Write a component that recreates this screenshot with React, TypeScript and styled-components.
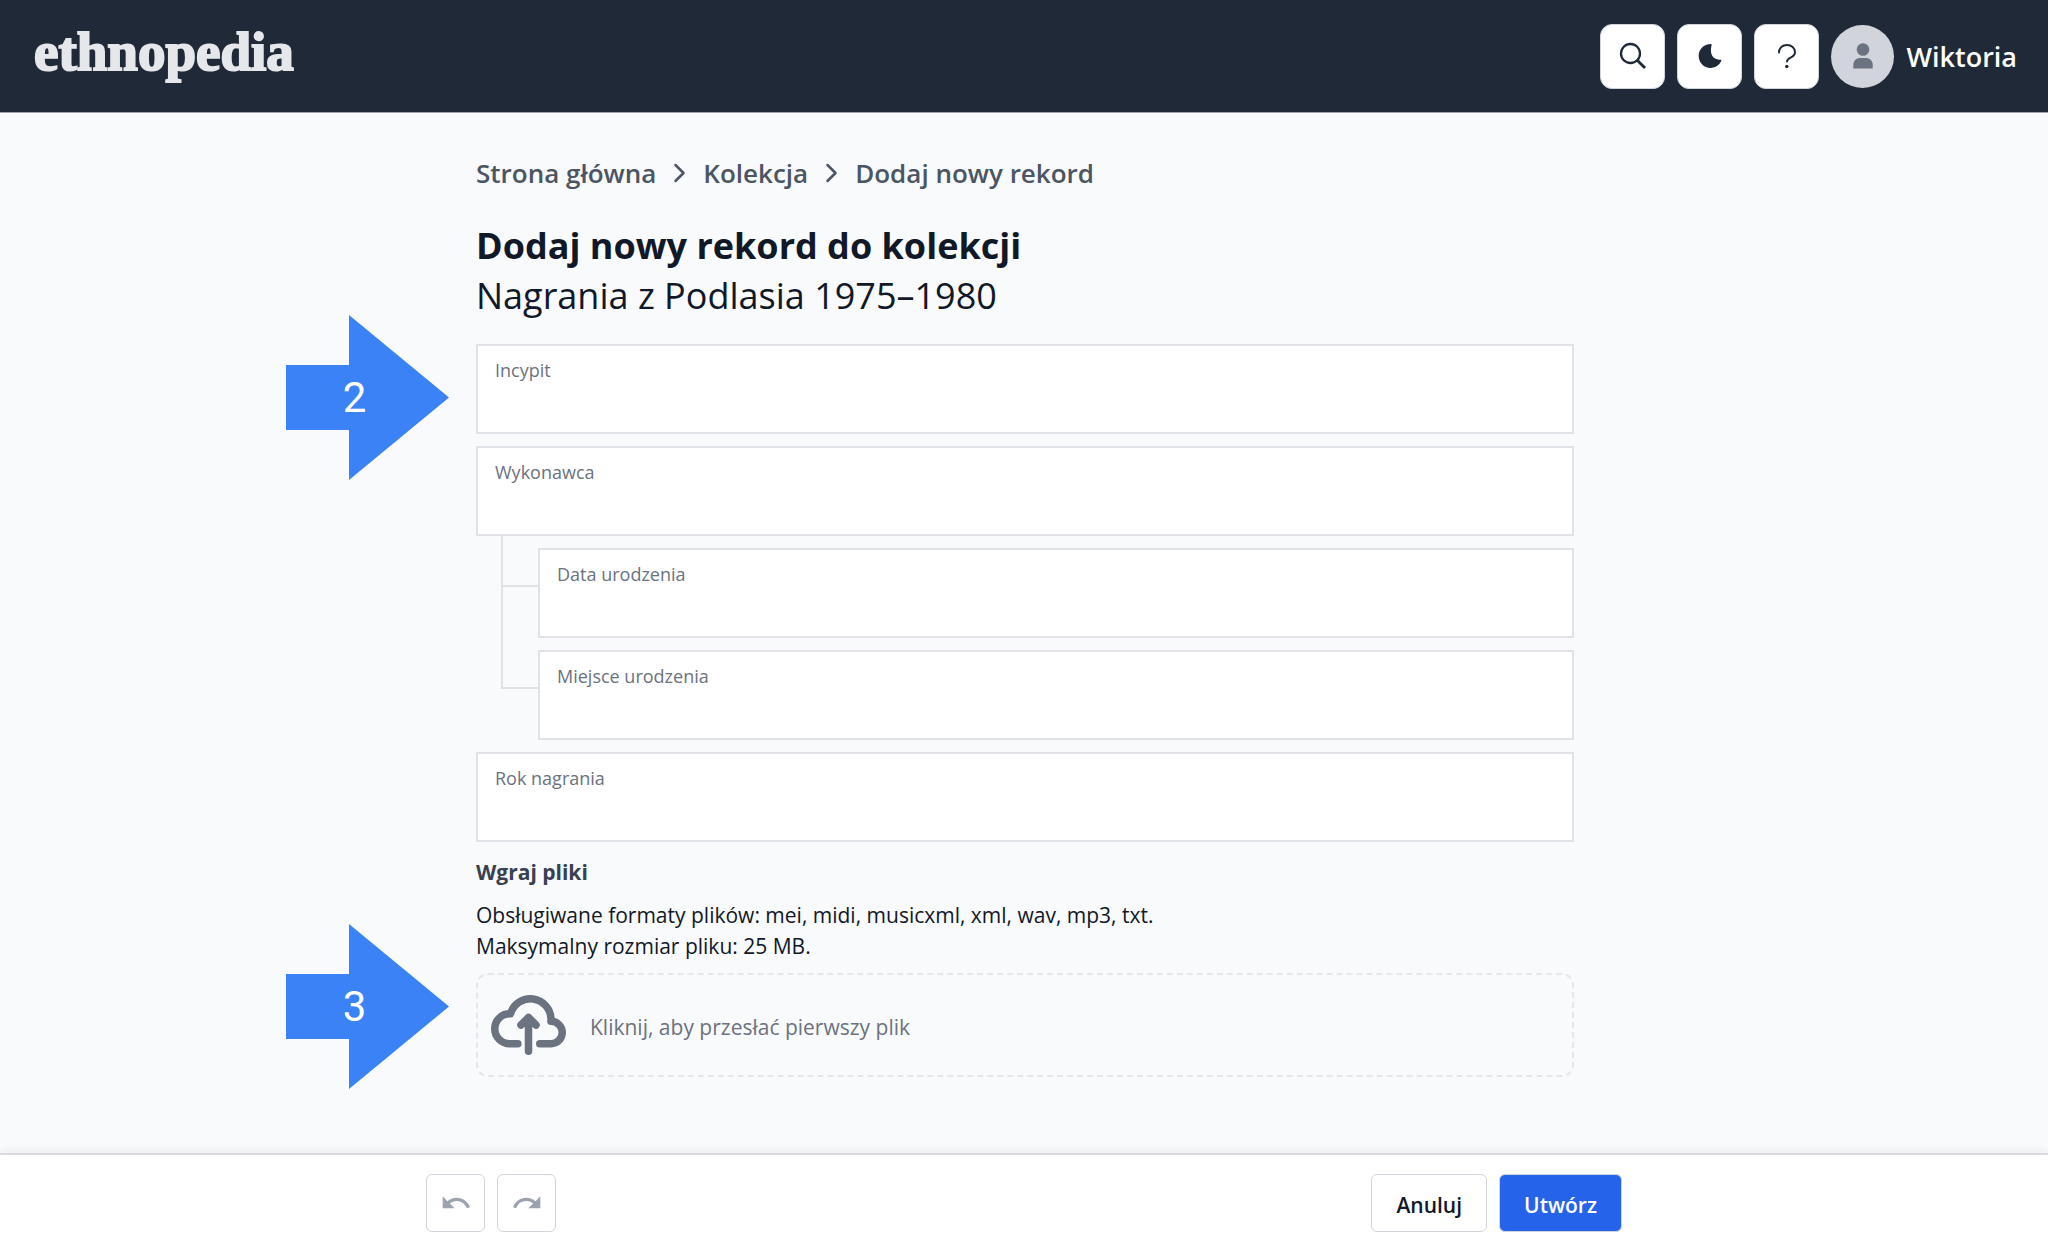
import React from "react";
import styled, { createGlobalStyle } from "styled-components";
import { MdRedo, MdUndo } from "react-icons/md";

const GlobalStyle = createGlobalStyle`
  *, *::before, *::after { box-sizing: border-box; }
  body {
    margin: 0;
    background: #f9fafb;
    color: #111827;
    font-family: "Open Sans", "Noto Sans", sans-serif;
    font-size: 21px;
    line-height: 31px;
  }
  button, input { font: inherit; color: inherit; }
  h1, p, ol { margin: 0; padding: 0; }
`;

const Page = styled.div`
  min-height: 100vh;
  display: flex;
  flex-direction: column;
`;

const Header = styled.header`
  display: flex;
  align-items: center;
  justify-content: space-between;
  height: 113px;
  padding: 0 31px 0 34px;
  background: #1f2937;
  border-bottom: 1px solid #9ca3af;
`;

const Logo = styled.a`
  color: #e5e7eb;
  font-family: "Liberation Serif", serif;
  font-size: 55px;
  font-weight: 700;
  line-height: 64px;
  padding-bottom: 8px;
  text-decoration: none;
  -webkit-text-stroke: 2px #e5e7eb;
`;

const Tools = styled.div`
  display: flex;
  align-items: center;
  gap: 12px;
`;

const ToolButton = styled.button`
  display: grid;
  place-items: center;
  width: 65px;
  height: 65px;
  padding: 0;
  color: #1f2937;
  background: #fff;
  border: 1px solid #d1d5db;
  border-radius: 12px;
`;

const Avatar = styled.span`
  display: grid;
  place-items: center;
  width: 63px;
  height: 63px;
  border-radius: 50%;
  background: #d1d5db;
  color: #6b7280;
`;

const UserName = styled.span`
  color: #fff;
  font-size: 27px;
  font-weight: 600;
`;

const Main = styled.main`
  flex: 1;
  width: 100%;
  max-width: 1196px;
  margin: 0 auto;
  padding: 40px 48px 40px 50px;
`;

const Crumbs = styled.ol`
  display: flex;
  align-items: center;
  gap: 17px;
  list-style: none;
  color: #4b5563;
  font-size: 26px;
  font-weight: 600;
  line-height: 40px;

  li { display: flex; align-items: center; gap: 17px; }
  a { color: inherit; text-decoration: none; }
`;

const Title = styled.h1`
  margin-top: 28px;
  font-size: 36px;
  font-weight: 700;
  line-height: 50px;
`;

const Subtitle = styled.span`
  display: block;
  font-weight: 400;
`;

const Fields = styled.div`
  display: flex;
  flex-direction: column;
  gap: 12px;
  margin-top: 23px;
`;

const Anchor = styled.div`
  position: relative;
`;

const FieldBox = styled.label`
  display: flex;
  flex-direction: column;
  height: 90px;
  padding: 9px 17px;
  background: #fff;
  border: 2px solid #e0e2e7;
  color: #6b7280;
  font-size: 18px;
  line-height: 30px;
`;

const FieldInput = styled.input`
  width: 100%;
  min-height: 0;
  flex: 1;
  padding: 0;
  border: 0;
  outline: 0;
  background: transparent;
  color: #111827;
`;

const ChildRow = styled.div`
  display: grid;
  grid-template-columns: 62px 1fr;
`;

const Elbow = styled.span<{ $first?: boolean }>`
  height: ${(p) => (p.$first ? 51 : 102)}px;
  margin: ${(p) => (p.$first ? -12 : -63)}px 0 0 25px;
  border: solid #e0e2e7;
  border-width: 0 0 2px 2px;
`;

const UploadTitle = styled.p`
  margin-top: 15px;
  color: #374151;
  font-weight: 700;
`;

const UploadInfo = styled.p`
  margin: 12px 0 11px;
`;

const DropZone = styled.label`
  display: flex;
  align-items: center;
  gap: 24px;
  height: 104px;
  padding: 0 13px;
  border: 2px dashed #e5e7eb;
  border-radius: 12px;
  color: #6b7280;
`;

const DropText = styled.span`
  padding-top: 4px;
`;

const HiddenFile = styled.input`
  width: 0;
  height: 0;
  opacity: 0;
  position: absolute;
`;

const Pointer = styled.div<{ $top: number }>`
  position: absolute;
  right: calc(100% + 27px);
  top: ${(p) => p.$top}px;
  display: flex;
  align-items: center;
  justify-content: center;
  width: 163px;
  height: 165px;
  padding-right: 26px;
  background: #3b82f6;
  clip-path: polygon(0 50px, 63px 50px, 63px 0, 100% 50%, 63px 100%, 63px 115px, 0 115px);
  color: #fff;
  font-family: Roboto, "Open Sans", sans-serif;
  font-size: 42px;
`;

const Footer = styled.footer`
  background: #fff;
  border-top: 2px solid #d8dade;
  box-shadow: 0 -2px 8px rgba(0, 0, 0, 0.06);
`;

const FooterInner = styled.div`
  display: flex;
  justify-content: space-between;
  width: 100%;
  max-width: 1196px;
  margin: 0 auto;
  padding: 19px 0 21px;
`;

const Group = styled.div`
  display: flex;
  gap: 12px;
`;

const Action = styled.button<{ $primary?: boolean; $icon?: boolean }>`
  display: grid;
  place-items: center;
  height: 58px;
  width: ${(p) => (p.$icon ? "59px" : "auto")};
  padding: ${(p) => (p.$icon ? "0" : "4px 24px 0")};
  border: 1px solid #d1d5db;
  border-radius: 6px;
  background: ${(p) => (p.$primary ? "#2563eb" : "#fff")};
  color: ${(p) => (p.$primary ? "#fff" : p.$icon ? "#9ca3af" : "#111827")};
  font-weight: 600;
`;

const SearchIcon = () => (
  <svg width="28" height="28" viewBox="0 0 28 28" fill="none" stroke="currentColor">
    <circle cx="11.5" cy="11.5" r="9.5" strokeWidth="2.3" />
    <path d="M18.5 18.5l7.5 7.5" strokeWidth="2.8" />
  </svg>
);

const MoonIcon = () => (
  <svg width="24" height="26" viewBox="0 0 24 26" fill="currentColor">
    <path d="M13.2 1C6 .8.7 6.200.7 13c0 6.700 5.300 12 11.800 12 5.200 0 9.200-3 10.900-7.400.2-.5-.1-.8-.6-.8-7.500.2-11.500-5.200-9.300-14.300.2-.8.1-1.500-.3-1.500z" />
  </svg>
);

const QuestionIcon = () => (
  <svg width="20" height="26" viewBox="0 0 20 26" fill="none" stroke="currentColor" strokeWidth="2" strokeLinecap="round">
    <path d="M2 9.500C2 5 5.500 2 10 2s8 3 8 7.200c0 5.800-8 4.800-8 9.300" />
    <circle cx="9.800" cy="23.500" r="1.700" fill="currentColor" stroke="none" />
  </svg>
);

const PersonIcon = () => (
  <svg width="20" height="26" viewBox="0 0 20 26" fill="currentColor">
    <circle cx="10" cy="6.500" r="6.300" />
    <path d="M.3 25.500v-3.500c0-4 2.700-6.900 6.700-6.900h6c4 0 6.700 2.900 6.700 6.900v3.500z" />
  </svg>
);

const Chevron = () => (
  <svg width="13" height="20" viewBox="0 0 13 20" fill="none" stroke="currentColor" strokeWidth="2.500" strokeLinecap="round" strokeLinejoin="round" aria-hidden="true">
    <path d="M2.500 2l8 8-8 8" />
  </svg>
);

const CloudIcon = () => (
  <svg width="75" height="60" viewBox="0 0 20 16" fill="none" stroke="currentColor" strokeWidth="2" strokeLinecap="round" strokeLinejoin="round" aria-hidden="true">
    <path d="M13 13h3a3 3 0 0 0 0-6h-.025A5.560 5.560 0 0 0 16 6.500 5.500 5.500 0 0 0 5.207 5.021C5.137 5.017 5.071 5 5 5a4 4 0 0 0 0 8h2.167M10 15V6m0 0L8 8m2-2 2 2" />
  </svg>
);

function Field({ id, label }: { id: string; label: string }) {
  return (
    <FieldBox htmlFor={id}>
      {label}
      <FieldInput id={id} type="text" />
    </FieldBox>
  );
}

export default function App() {
  return (
    <Page>
      <GlobalStyle />
      <Header>
        <Logo href="#">ethnopedia</Logo>
        <Tools>
          <ToolButton aria-label="Szukaj"><SearchIcon /></ToolButton>
          <ToolButton aria-label="Tryb ciemny"><MoonIcon /></ToolButton>
          <ToolButton aria-label="Pomoc"><QuestionIcon /></ToolButton>
          <Avatar><PersonIcon /></Avatar>
          <UserName>Wiktoria</UserName>
        </Tools>
      </Header>
      <Main>
        <nav>
          <Crumbs>
            <li><a href="#">Strona główna</a></li>
            <li><Chevron /><a href="#">Kolekcja</a></li>
            <li><Chevron /><a href="#">Dodaj nowy rekord</a></li>
          </Crumbs>
        </nav>
        <Title>
          Dodaj nowy rekord do kolekcji
          <Subtitle>Nagrania z Podlasia 1975–1980</Subtitle>
        </Title>
        <Fields>
          <Anchor>
            <Pointer $top={-29}>2</Pointer>
            <Field id="incypit" label="Incypit" />
          </Anchor>
          <Field id="wykonawca" label="Wykonawca" />
          <ChildRow>
            <Elbow $first />
            <Field id="data" label="Data urodzenia" />
          </ChildRow>
          <ChildRow>
            <Elbow />
            <Field id="miejsce" label="Miejsce urodzenia" />
          </ChildRow>
          <Field id="rok" label="Rok nagrania" />
        </Fields>
        <UploadTitle>Wgraj pliki</UploadTitle>
        <UploadInfo>
          Obsługiwane formaty plików: mei, midi, musicxml, xml, wav, mp3, txt.
          <br />
          Maksymalny rozmiar pliku: 25 MB.
        </UploadInfo>
        <Anchor>
          <Pointer $top={-49}>3</Pointer>
          <DropZone htmlFor="pliki">
            <CloudIcon />
            <DropText>Kliknij, aby przesłać pierwszy plik</DropText>
            <HiddenFile id="pliki" type="file" />
          </DropZone>
        </Anchor>
      </Main>
      <Footer>
        <FooterInner>
          <Group>
            <Action $icon aria-label="Cofnij"><MdUndo size={32} /></Action>
            <Action $icon aria-label="Ponów"><MdRedo size={32} /></Action>
          </Group>
          <Group>
            <Action>Anuluj</Action>
            <Action $primary>Utwórz</Action>
          </Group>
        </FooterInner>
      </Footer>
    </Page>
  );
}
